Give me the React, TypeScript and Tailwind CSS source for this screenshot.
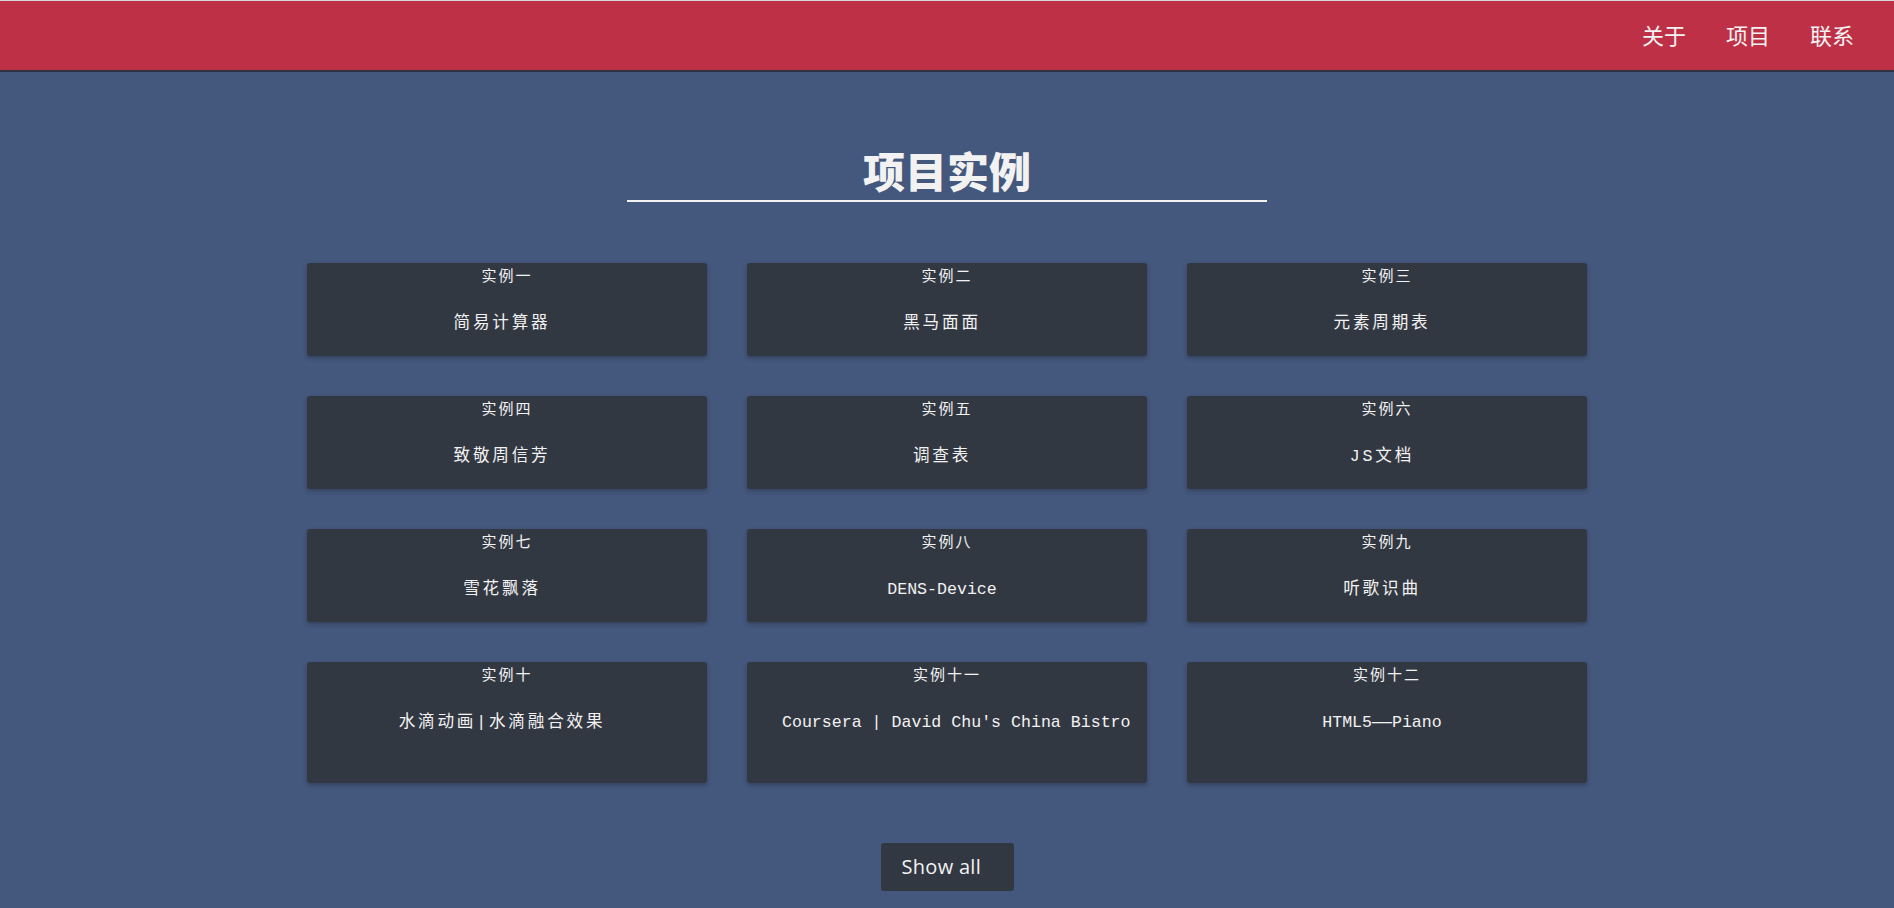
import React from 'react';

interface Project {
  label: string;
  name: string;
  cjk?: boolean;
}

const projects: Project[] = [
  { label: '实例一', name: '简易计算器', cjk: true },
  { label: '实例二', name: '黑马面面', cjk: true },
  { label: '实例三', name: '元素周期表', cjk: true },
  { label: '实例四', name: '致敬周信芳', cjk: true },
  { label: '实例五', name: '调查表', cjk: true },
  { label: '实例六', name: 'JS文档', cjk: true },
  { label: '实例七', name: '雪花飘落', cjk: true },
  { label: '实例八', name: 'DENS-Device' },
  { label: '实例九', name: '听歌识曲', cjk: true },
  { label: '实例十', name: '水滴动画|水滴融合效果', cjk: true },
  { label: '实例十一', name: "Coursera | David Chu's China Bistro" },
  { label: '实例十二', name: 'HTML5——Piano' },
];

const cjkFont = "font-['Noto_Sans_CJK_SC',sans-serif]";

function NavBar() {
  return (
    <header className="h-[72px] bg-[#be3046] border-t border-t-[#d6d6d6] border-b-2 border-b-[#2c3240] flex items-center justify-end pr-10 pb-[2px]">
      <nav className={`flex gap-10 text-[22px] text-[#f3f3f3] ${cjkFont}`}>
        <a href="#about">关于</a>
        <a href="#projects">项目</a>
        <a href="#contact">联系</a>
      </nav>
    </header>
  );
}

function ProjectCard({ project, tall }: { project: Project; tall: boolean }) {
  return (
    <div
      className={`bg-[#323842] rounded-[3px] shadow-[0_2px_4px_rgba(0,0,0,0.25)] flex flex-col pt-[2px] text-[#f2f2f2] ${
        tall ? 'h-[121px]' : 'h-[93px]'
      }`}
    >
      <h3 className={`text-center text-[15px] leading-5 tracking-[2px] ${cjkFont}`}>{project.label}</h3>
      <p
        className={`mt-[27px] pl-[35px] pr-[45px] text-center text-[16.6px] leading-6 whitespace-nowrap font-['Liberation_Mono','Noto_Sans_CJK_SC',monospace] ${
          project.cjk ? 'tracking-[2.8px]' : ''
        }`}
      >
        {project.name}
      </p>
    </div>
  );
}

export default function App() {
  return (
    <div className="min-h-screen bg-[#44577c]">
      <NavBar />
      <main id="projects" className="flex flex-col items-center pt-[73px] pb-10">
        <h1
          className={`w-[640px] text-center text-[42px] leading-[50px] font-black text-[#f2f2f2] pb-[5px] border-b-2 border-[#f2f2f2] ${cjkFont}`}
        >
          项目实例
        </h1>

        <div className="mt-[61px] w-[1280px] grid grid-cols-3 gap-10">
          {projects.map((p, i) => (
            <ProjectCard key={p.label} project={p} tall={i >= 9} />
          ))}
        </div>

        <button className="mt-[60px] w-[133px] h-12 bg-[#323842] rounded-[3px] text-left pl-[21px] text-[20px] tracking-[0.3px] text-[#f2f2f2] font-['Open_Sans',sans-serif]">
          Show all
        </button>
      </main>
    </div>
  );
}
